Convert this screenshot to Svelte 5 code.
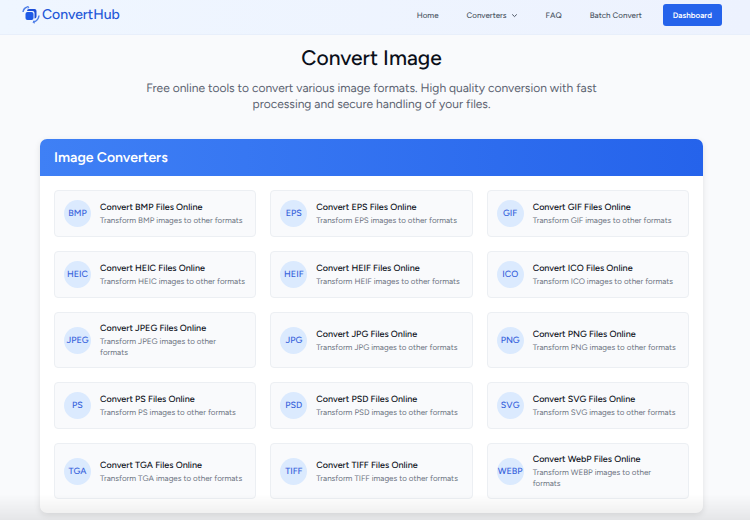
<script>
  const formats = ['BMP', 'EPS', 'GIF', 'HEIC', 'HEIF', 'ICO', 'JPEG', 'JPG', 'PNG', 'PS', 'PSD', 'SVG', 'TGA', 'TIFF', 'WebP'];
</script>

<div class="page">
  <header>
    <a class="brand" href="#home">
      <svg width="18" height="18" viewBox="0 0 36 36" fill="none" aria-hidden="true">
        <path d="M14 6h11a4 4 0 0 1 4 4v11a4 4 0 0 1-4 4V14a4 4 0 0 0-4-4H10a4 4 0 0 1 4-4z" fill="#1d4ed8" />
        <rect x="7" y="12" width="16" height="16" rx="4" fill="#1f5ae6" />
        <path d="M2 12C3 6 6 3 11 2" stroke="#4f7fe8" stroke-width="3" />
        <path d="M10 1l4 1-2 3" stroke="#4f7fe8" stroke-width="2" />
        <path d="M34 19c-1 7-4 11-10 13" stroke="#4f7fe8" stroke-width="3" />
        <path d="M26 34l-4-1 2-4" stroke="#4f7fe8" stroke-width="2" />
      </svg>
      <span>ConvertHub</span>
    </a>
    <nav>
      <a href="#home">Home</a>
      <a href="#converters">Converters
        <svg width="7" height="7" viewBox="0 0 7 7" fill="none" stroke="currentColor" aria-hidden="true"><path d="M1.2 2.4l2.3 2.2 2.3-2.2" /></svg>
      </a>
      <a href="#faq">FAQ</a>
      <a href="#batch">Batch Convert</a>
      <a class="dashboard" href="#dashboard">Dashboard</a>
    </nav>
  </header>

  <main>
    <h1>Convert Image</h1>
    <p class="intro">Free online tools to convert various image formats. High quality conversion with fast processing and secure handling of your files.</p>

    <section>
      <h2>Image Converters</h2>
      <div class="grid">
        {#each formats as name}
          <a class="card" href="#{name.toLowerCase()}">
            <span class="badge">{name.toUpperCase()}</span>
            <span class="copy">
              <strong>Convert {name} Files Online</strong>
              <span class="desc">Transform {name.toUpperCase()} images to other formats</span>
            </span>
          </a>
        {/each}
      </div>
    </section>
  </main>
  <div class="fade"></div>
</div>

<style>
  :global(body) {
    margin: 0;
    background: #f9fafc;
  }
  .page {
    font-family: Figtree, Lato, sans-serif;
    text-rendering: geometricPrecision;
    color: #0b0f19;
    background: #f9fafc;
    min-height: 100vh;
    overflow: hidden;
  }
  a {
    color: inherit;
    text-decoration: none;
  }
  header {
    box-sizing: border-box;
    height: 35px;
    padding: 0 28px 4px 22px;
    display: flex;
    align-items: center;
    justify-content: space-between;
    background: linear-gradient(90deg, #eff6ff, #edf2fe);
    border-bottom: 1px solid #e8effb;
  }
  .brand {
    display: flex;
    align-items: center;
    gap: 2px;
    color: #2458d8;
    font-size: 14px;
    line-height: 20px;
    font-weight: 500;
  }
  nav {
    display: flex;
    align-items: center;
    font-size: 8px;
    font-weight: 500;
    color: #4b5563;
    gap: 28px;
  }
  nav a {
    display: flex;
    align-items: center;
    gap: 4px;
  }
  nav .dashboard {
    margin-left: -7px;
    padding: 0 10px;
    height: 22px;
    border-radius: 3px;
    background: #2563eb;
    color: #fff;
    font-weight: 600;
  }
  main {
    padding: 10px 47px 6px 40px;
  }
  h1 {
    margin: 0;
    font-size: 21px;
    line-height: 28px;
    font-weight: 500;
    text-align: center;
  }
  .intro {
    margin: 7px auto 27px;
    max-width: 460px;
    font-size: 12px;
    line-height: 16px;
    font-weight: 400;
    color: #5b6270;
    text-align: center;
  }
  section {
    background: #fff;
    border-radius: 7px;
    box-shadow: 0 2px 6px rgb(0 0 0 / 0.1);
  }
  h2 {
    margin: 0;
    padding: 0 14px;
    font-size: 14px;
    line-height: 37px;
    font-weight: 600;
    color: #fff;
    background: linear-gradient(90deg, #3f80f5, #2563eb);
    border-radius: 7px 7px 0 0;
  }
  .grid {
    display: grid;
    grid-template-columns: repeat(3, minmax(0, 1fr));
    gap: 14px;
    padding: 14px;
  }
  .card {
    display: flex;
    align-items: center;
    gap: 9px;
    padding: 9px 10px 9px 9px;
    border: 1px solid #eceff3;
    border-radius: 4px;
    background: #f9fafc;
  }
  .badge {
    flex: none;
    width: 27px;
    height: 27px;
    border-radius: 50%;
    background: #dbeafe;
    color: #3763dc;
    font-size: 9px;
    font-weight: 500;
    display: flex;
    align-items: center;
    justify-content: center;
  }
  .copy {
    min-width: 0;
    display: flex;
    flex-direction: column;
  }
  strong {
    font-size: 9px;
    line-height: 14px;
    font-weight: 500;
  }
  .desc {
    font-size: 8px;
    line-height: 11px;
    color: #6b7280;
  }
  .fade {
    position: fixed;
    left: 0;
    right: 0;
    bottom: 0;
    height: 26px;
    pointer-events: none;
    background: linear-gradient(rgb(0 0 0 / 0), rgb(0 0 0 / 0.08));
  }
</style>
